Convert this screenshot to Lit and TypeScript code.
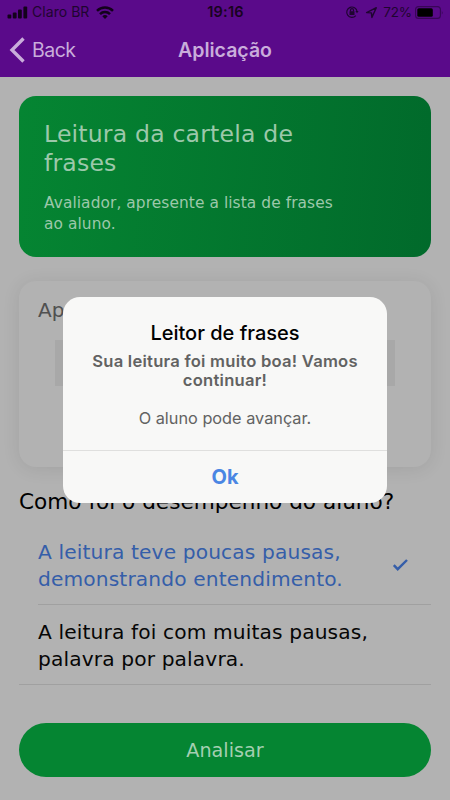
import { LitElement, html, css } from "lit";
import { customElement } from "lit/decorators.js";

@customElement("status-bar")
class StatusBar extends LitElement {
  static styles = css`
    :host { display: grid; grid-template-columns: 1fr auto 1fr; align-items: center; height: 24px; padding: 0 6px 0 7px; color: #1f0530; font: 13.5px/24px Inter, sans-serif; }
    .side { display: flex; align-items: center; }
    .right { justify-content: flex-end; }
    .carrier { margin: 0 7px 0 4px; font-size: 14px; letter-spacing: 0.05px; }
    .time { font-weight: 600; font-size: 14.5px; color: #18031f; letter-spacing: 0.2px; }
    .pct { margin: 0 3px 0 5px; letter-spacing: -0.1px; }
    svg { display: block; flex: none; }
    .nav { margin-left: 6px; }
  `;
  render() {
    return html`
      <div class="side">
        <svg width="21" height="13" viewBox="0 0 21 13" fill="#13021b">
          <rect x="0.5" y="8.5" width="3.8" height="4" rx="1" /><rect x="5.8" y="6.5" width="3.8" height="6" rx="1" />
          <rect x="11" y="3.5" width="3.8" height="9" rx="1" /><rect x="16.4" y="0.5" width="3.8" height="12" rx="1" />
        </svg>
        <span class="carrier">Claro BR</span>
        <svg width="18" height="13" viewBox="0 0 18 13" fill="none" stroke="#13021b" stroke-width="2.5">
          <path d="M1 4.8a11.5 11.5 0 0 1 16 0" /><path d="M4 8.1a7.2 7.2 0 0 1 10 0" />
          <path d="M6.3 10.3a3.9 3.9 0 0 1 5.4 0L9 13z" fill="#13021b" stroke="none" />
        </svg>
      </div>
      <div class="time">19:16</div>
      <div class="side right">
        <svg width="14" height="14" viewBox="0 0 14 14" fill="none" stroke="#1f0530" stroke-width="1.2">
          <path d="M10.8 10.7A5.2 5.2 0 1 1 12.1 6.5" /><path d="M10.4 6h3.2l-1.6 2.2z" fill="#1f0530" stroke="none" />
          <rect x="4.5" y="6.3" width="5" height="3.8" rx=".5" fill="#1f0530" stroke="none" /><path d="M5.5 6.5V5.2a1.5 1.5 0 0 1 3 0v1.3" />
        </svg>
        <svg class="nav" width="13" height="13" viewBox="0 0 13 13" fill="none" stroke="#1f0530" stroke-width="1.4" stroke-linejoin="round">
          <path d="M1.6 6.6 11.3 1.7 6.9 11.4 6.4 6.9z" />
        </svg>
        <span class="pct">72%</span>
        <svg width="29" height="13" viewBox="0 0 29 13">
          <rect x=".6" y=".6" width="24.8" height="11.8" rx="3" fill="none" stroke="#380657" stroke-width="1.1" />
          <rect x="2.3" y="2.3" width="15.5" height="8.4" rx="1.5" fill="#000" /><path d="M26.8 4.4q1.6 2.1 0 4.2z" fill="#380657" />
        </svg>
      </div>`;
  }
}

@customElement("option-item")
class OptionItem extends LitElement {
  static properties = { lines: { type: Array }, selected: { type: Boolean, reflect: true } };
  declare lines: string[];
  declare selected: boolean;
  static styles = css`
    :host { display: flex; align-items: center; height: 80px; box-sizing: border-box; border-bottom: 1px solid #a0a0a0; font: 20.2px/26.5px "DejaVu Sans", sans-serif; letter-spacing: 0.13px; color: #060606; }
    :host([selected]) { color: #355ea9; }
    .text { flex: 1; white-space: nowrap; padding-top: 2px; }
    svg { display: block; margin-right: 22px; }
  `;
  render() {
    return html`
      <div class="text">${this.lines.map((l) => html`<div>${l}</div>`)}</div>
      ${this.selected
        ? html`<svg width="17" height="14" viewBox="0 0 17 14" fill="none" stroke="currentColor" stroke-width="2.4"><path d="M1.8 7.2 5.7 11.2 15 2" /></svg>`
        : null}`;
  }
}

@customElement("app-root")
class AppRoot extends LitElement {
  static styles = css`
    :host { display: block; position: relative; width: 450px; height: 800px; overflow: hidden; background: #b2b2b2; font-family: "DejaVu Sans", sans-serif; color: #000; }
    .header { height: 77px; background: #5a0a8a; font-family: Inter, sans-serif; }
    .bar { display: grid; grid-template-columns: 1fr auto 1fr; align-items: center; height: 52px; padding: 0 9px; color: #c9addb; }
    .back { display: flex; align-items: center; gap: 7px; font-size: 19.5px; letter-spacing: -0.5px; }
    .title { font-size: 19.5px; font-weight: 600; }
    .content { padding: 19px 19px 0; }
    .intro { height: 161px; box-sizing: border-box; border-radius: 17px; padding: 24px 25px; background: linear-gradient(95deg, #058532, #016a2b); color: #9cc8aa; white-space: nowrap; }
    .big { font-size: 23.6px; line-height: 28.5px; letter-spacing: 0.17px; }
    .small { margin-top: 16px; font-size: 15.4px; line-height: 20.5px; letter-spacing: 0.08px; }
    .card { height: 186px; margin-top: 24px; box-sizing: border-box; border-radius: 17px; padding: 15px 19px; background: #b2b2b2; box-shadow: 0 2px 18px rgba(0, 0, 0, .09); font-size: 20px; line-height: 28px; color: #505050; }
    .field { height: 46px; margin: 16px 17px 0; background: #a8a8a8; }
    .question { margin-top: 20px; height: 38px; line-height: 29px; font-size: 21.6px; white-space: nowrap; }
    .first { margin-left: 19px; }
    .second { padding-left: 19px; }
    .button { display: flex; align-items: center; justify-content: center; height: 54px; box-sizing: border-box; padding-top: 1px; margin-top: 37.5px; border-radius: 27px; background: #058532; color: #a4cfb1; font-size: 19.2px; }
    .dialog { position: absolute; left: 63px; top: 297px; width: 324px; height: 206px; box-sizing: border-box; padding-top: 23px; border-radius: 17px; background: #f8f8f7; text-align: center; font-family: Inter, sans-serif; display: flex; flex-direction: column; }
    .dtitle { font-size: 20px; line-height: 27px; font-weight: 500; }
    .strong { font-size: 16.6px; letter-spacing: 0.24px; font-weight: 600; line-height: 19px; color: #626262; margin-top: 5px; }
    .msg { font-size: 16.3px; line-height: 19px; margin-top: 19px; color: #626262; }
    .ok { margin-top: auto; height: 52px; border-top: 1px solid #dfdfde; line-height: 53px; font-size: 20px; font-weight: 700; color: #4a86e3; }
  `;
  render() {
    return html`
      <div class="header">
        <status-bar></status-bar>
        <div class="bar">
          <div class="back">
            <svg width="16" height="26" viewBox="0 0 16 26" fill="none" stroke="currentColor" stroke-width="3.4"><path d="M14.5 1.5 3 13 14.5 24.5" /></svg>
            <span>Back</span>
          </div>
          <div class="title">Aplicação</div>
        </div>
      </div>
      <div class="content">
        <div class="intro">
          <div class="big"><div>Leitura da cartela de</div><div>frases</div></div>
          <div class="small"><div>Avaliador, apresente a lista de frases</div><div>ao aluno.</div></div>
        </div>
        <div class="card">Ap<div class="field"></div></div>
        <div class="question">Como foi o desempenho do aluno?</div>
        <option-item class="first" selected .lines=${["A leitura teve poucas pausas,", "demonstrando entendimento."]}></option-item>
        <option-item class="second" .lines=${["A leitura foi com muitas pausas,", "palavra por palavra."]}></option-item>
        <div class="button">Analisar</div>
      </div>
      <div class="dialog">
        <div class="dtitle">Leitor de frases</div>
        <div class="strong"><div>Sua leitura foi muito boa! Vamos</div><div>continuar!</div></div>
        <div class="msg">O aluno pode avançar.</div>
        <div class="ok">Ok</div>
      </div>`;
  }
}
